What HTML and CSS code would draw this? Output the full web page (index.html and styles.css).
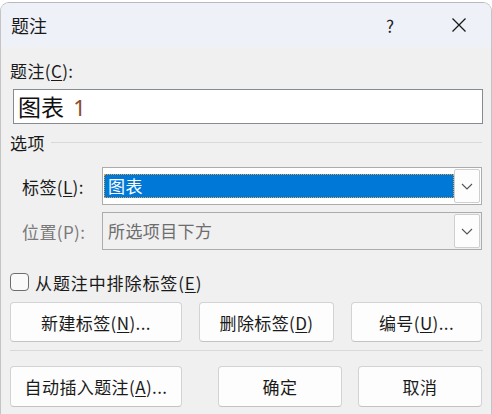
FILE: index.html
```html
<!DOCTYPE html>
<html lang="zh-CN">
<head>
<meta charset="utf-8">
<link rel="stylesheet" href="styles.css">
</head>
<body>
<div class="window">
  <div class="titlebar">
    <span class="title">题注</span>
    <span class="help">?</span>
    <span class="close">
      <svg width="14" height="14" viewBox="0 0 14 14"><path d="M0.5 0.5 L13.5 13.5 M13.5 0.5 L0.5 13.5" stroke="#1a1a1a" stroke-width="1.3" fill="none"/></svg>
    </span>
  </div>
  <div class="content">
    <div class="caption-label">题注(<u>C</u>):</div>
    <div class="caption-input"><span class="cap-text">图表</span> <span class="cap-num">1</span></div>
    <div class="group-head"><span>选项</span><div class="group-line"></div></div>
    <div class="field-row">
      <span class="field-label">标签(<u>L</u>):</span>
      <div class="combo">
        <div class="combo-value"><span class="selected">图表</span></div>
        <div class="combo-btn"><svg width="12" height="7" viewBox="0 0 12 7"><path d="M1 1 L6 6 L11 1" stroke="#555" stroke-width="1.1" fill="none"/></svg></div>
      </div>
    </div>
    <div class="field-row second disabled">
      <span class="field-label">位置(P):</span>
      <div class="combo">
        <div class="combo-value"><span class="plain">所选项目下方</span></div>
        <div class="combo-btn"><svg width="12" height="7" viewBox="0 0 12 7"><path d="M1 1 L6 6 L11 1" stroke="#555" stroke-width="1.1" fill="none"/></svg></div>
      </div>
    </div>
    <div class="check-row">
      <span class="checkbox"></span>
      <span class="check-label">从题注中排除标签(<u>E</u>)</span>
    </div>
    <div class="btn-row top">
      <div class="btn w172">新建标签(<u>N</u>)...</div>
      <div class="btn w135">删除标签(<u>D</u>)</div>
      <div class="btn w131">编号(<u>U</u>)...</div>
    </div>
    <div class="separator"></div>
    <div class="btn-row bottom">
      <div class="btn w172">自动插入题注(<u>A</u>)...</div>
      <div class="btn w124 ok">确定</div>
      <div class="btn w124 cancel">取消</div>
    </div>
  </div>
</div>
</body>
</html>
```
FILE: styles.css
```css
* { box-sizing: border-box; }
html, body { margin: 0; padding: 0; }
body {
  width: 492px;
  height: 414px;
  background: #ffffff;
  font-family: "Noto Sans CJK SC", "Noto Sans", sans-serif;
  font-size: 17px;
  letter-spacing: 0.4px;
  color: #1a1a1a;
  overflow: hidden;
}
u { text-decoration-thickness: 1px; text-underline-offset: 2px; }
.window {
  margin-top: 2px;
  height: 412px;
  border-top: 1px solid #b9b9bb;
  border-left: 1px solid #c4c4c6;
  border-right: 1px solid #c4c4c6;
  border-radius: 9px 9px 0 0;
  background: #f0f0f0;
  overflow: hidden;
}
.titlebar {
  height: 44px;
  background: #eff1f8;
  display: flex;
  align-items: center;
  padding-left: 10px;
}
.title { font-size: 18px; flex: 1; letter-spacing: 0; }
.help { font-size: 17px; width: 20px; margin-right: 46px; color: #222; }
.close { width: 14px; height: 14px; margin-right: 25px; display: flex; }
.content { padding: 0 9px 0 9px; }
.caption-label { margin-top: 13px; height: 22px; line-height: 22px; }
.caption-input {
  margin-top: 7px;
  margin-left: 3px;
  width: 470px;
  height: 35px;
  background: #fff;
  border: 1px solid #868a91;
  font-size: 23px;
  letter-spacing: 0;
  line-height: 32px;
  padding-left: 4px;
}
.cap-text { color: #111; }
.cap-num { color: #8b4a2b; font-family: "Noto Sans", sans-serif; font-size: 22px; margin-left: 4px; }
.group-head {
  margin-top: 8px;
  height: 20px;
  display: flex;
  align-items: center;
  gap: 6px;
}
.group-line { flex: 1; height: 1px; background: #d8d8d8; }
.field-row {
  margin-top: 15px;
  display: flex;
  align-items: center;
  height: 38px;
}
.field-row.second { margin-top: 7px; }
.field-label { width: 92px; padding-left: 12px; }
.disabled .field-label { color: #7a7a7a; }
.combo {
  width: 380px;
  height: 38px;
  border: 1px solid #acacac;
  background: #fff;
  display: flex;
  align-items: center;
  padding: 0 1px 0 1px;
}
.disabled .combo { background: #f0f0f0; }
.combo-value { flex: 1; height: 24px; display: flex; }
.selected {
  flex: 1;
  background: #0078d7;
  color: #fff;
  border: 1px dotted #e8a040;
  line-height: 21px;
  padding-left: 3px;
}
.plain { color: #6d6d6d; line-height: 24px; padding-left: 4px; }
.combo-btn {
  width: 26px;
  height: 34px;
  background: #fdfdfd;
  border: 1px solid #cfcfcf;
  border-radius: 2px;
  display: flex;
  align-items: center;
  justify-content: center;
}
.check-row {
  margin-top: 21px;
  height: 22px;
  display: flex;
  align-items: center;
  gap: 6px;
}
.check-label { letter-spacing: 0.9px; }
.checkbox {
  width: 19px;
  height: 18px;
  border: 1px solid #6e6e6e;
  border-radius: 4px;
  background: #fafafa;
}
.btn-row { display: flex; }
.btn-row.top { margin-top: 9px; gap: 17px; }
.btn-row.bottom { margin-top: 15px; }
.btn {
  height: 40px;
  background: #fdfdfd;
  border: 1px solid #d3d3d3;
  border-bottom-color: #c3c3c3;
  border-radius: 4px;
  display: flex;
  align-items: center;
  justify-content: center;
}
.btn-row.bottom .btn { height: 41px; }
.w172 { width: 172px; }
.w135 { width: 135px; }
.w131 { width: 131px; }
.w124 { width: 124px; }
.ok { margin-left: 36px; }
.cancel { margin-left: 16px; }
.separator { margin-top: 8px; height: 1px; background: #d8d8d8; width: 473px; }
```
